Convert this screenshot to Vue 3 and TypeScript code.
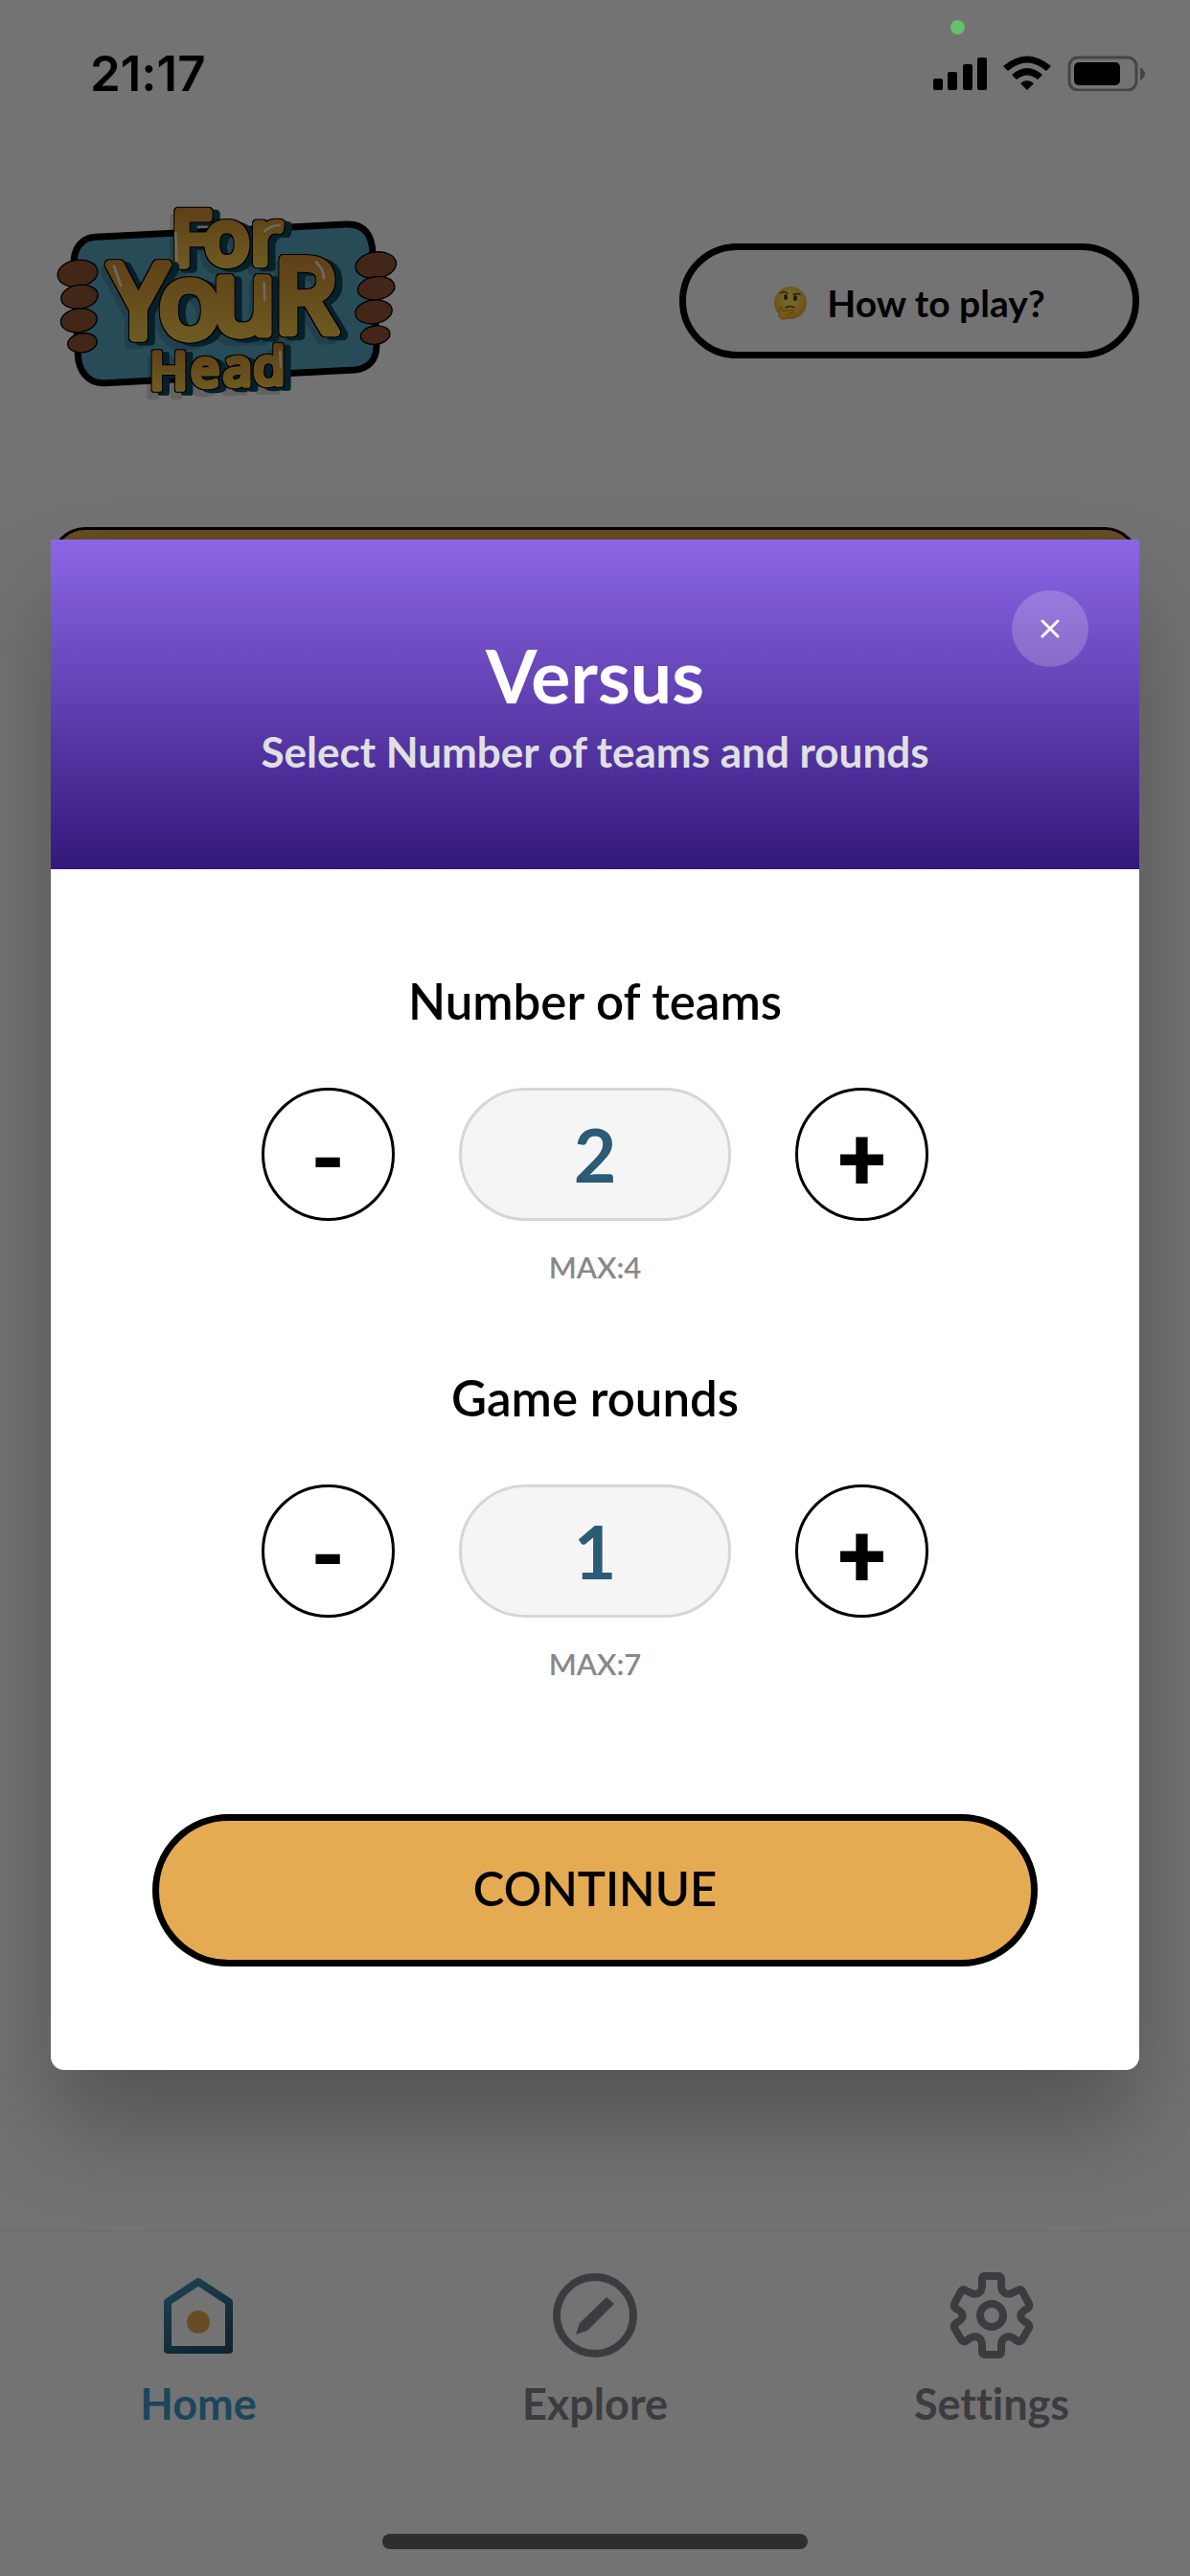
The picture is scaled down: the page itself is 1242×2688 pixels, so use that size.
<script setup lang="ts">
import { reactive, ref } from 'vue'

interface Counter {
  id: string
  label: string
  value: number
  max: number
}

interface Word {
  text: string
  x: string
  y: string
  size: number
  stroke: number
}

const open = ref(true)

const counters = reactive<Counter[]>([
  { id: 'teams', label: 'Number of teams', value: 2, max: 4 },
  { id: 'rounds', label: 'Game rounds', value: 1, max: 7 },
])

const step = (counter: Counter, delta: number) => {
  counter.value = Math.min(counter.max, Math.max(1, counter.value + delta))
}

const words: Word[] = [
  { text: 'For', x: '476 590 712', y: '256 255 253', size: 232, stroke: 26 },
  { text: 'Head', x: '407 521 623 722', y: '647 639 635 633', size: 160, stroke: 17 },
  { text: 'YouR', x: '312 472 644 836', y: '486 486 474 468', size: 320, stroke: 28 },
]

const fingers = [
  [122, 285, 63, 42], [128, 358, 58, 37], [126, 432, 57, 37], [137, 502, 46, 30],
  [1056, 259, 64, 41], [1057, 331, 58, 36], [1049, 405, 58, 37], [1054, 478, 46, 29],
]
</script>

<template>
  <div class="screen">
    <div class="app">
      <header class="status">
        <time class="clock">21:17</time>
        <svg class="status-icons" viewBox="0 0 222 37" width="222" height="37" aria-hidden="true">
          <rect x="1" y="24" width="10" height="12" rx="2" />
          <rect x="16" y="17" width="10" height="19" rx="2" />
          <rect x="32" y="9" width="10" height="27" rx="2" />
          <rect x="47" y="2" width="10" height="34" rx="2" />
          <path d="M74 11Q99-10 124 11L119 16Q99-1 79 16Z" />
          <path d="M83 20Q99 6 115 20L110 25Q99 16 88 25Z" />
          <path d="M92 29Q99 23 106 29L99 36Z" />
          <rect x="143" y="2" width="70" height="34" rx="9" fill="none" stroke="#999" stroke-width="3" />
          <rect x="148" y="7" width="48" height="24" rx="5" />
          <path d="M217 12Q222 15 222 19Q222 23 217 26Z" fill="#999" />
        </svg>
      </header>

      <div class="topbar">
        <svg class="logo" viewBox="50 50 1080 642" role="img" aria-label="For Your Head">
          <defs>
            <linearGradient id="gold" x1="0" y1="0" x2="0" y2="1">
              <stop offset="0.2" stop-color="#d08a34" />
              <stop offset="0.9" stop-color="#f8d24c" />
            </linearGradient>
            <filter id="block" x="-20%" y="-20%" width="140%" height="140%" color-interpolation-filters="sRGB">
              <feMorphology in="SourceAlpha" operator="dilate" radius="4" result="edge" />
              <feOffset in="edge" dx="22" dy="10" result="moved" />
              <feFlood flood-color="#10475d" />
              <feComposite in2="moved" operator="in" result="depth" />
              <feOffset in="edge" dx="-12" dy="22" result="low" />
              <feFlood flood-color="#000" flood-opacity="0.15" />
              <feComposite in2="low" operator="in" result="haze" />
              <feMerge>
                <feMergeNode in="haze" />
                <feMergeNode in="depth" />
                <feMergeNode in="edge" />
                <feMergeNode in="SourceGraphic" />
              </feMerge>
            </filter>
          </defs>
          <path d="M110 250C112 190 150 172 180 171L965 131C1020 130 1045 165 1046 225L1058 510C1058 560 1030 583 990 587L205 628C155 630 125 590 123 540Z" fill="#58a9c4" stroke="#000" stroke-width="21" />
          <ellipse v-for="(f, i) in fingers" :key="i" :cx="f[0]" :cy="f[1]" :rx="f[2]" :ry="f[3]" :transform="`rotate(-8 ${f[0]} ${f[1]})`" fill="#935537" stroke="#000" stroke-width="4" />
          <text v-for="w in words" :key="w.text" class="word" :x="w.x" :y="w.y" :font-size="w.size" :stroke-width="w.stroke" text-anchor="middle" filter="url(#block)">{{ w.text }}</text>
          <g fill="none" stroke="#f3e6d2" stroke-width="8" stroke-linecap="round">
            <path d="M429 158L432 244M236 262L258 324M706 316L708 368M756 530L758 576M868 250Q892 268 893 300M708 152Q728 134 754 134" />
          </g>
        </svg>
        <button class="help" type="button">
          <svg viewBox="0 0 36 36" width="36" height="36" aria-hidden="true">
            <defs>
              <radialGradient id="skin" cx="0.5" cy="0.4" r="0.6">
                <stop offset="0.3" stop-color="#ffe45c" />
                <stop offset="1" stop-color="#f2a92c" />
              </radialGradient>
            </defs>
            <circle cx="18" cy="18" r="17" fill="url(#skin)" />
            <ellipse cx="13" cy="12" rx="2" ry="3" fill="#5b3511" />
            <ellipse cx="23" cy="13" rx="2" ry="3" fill="#5b3511" />
            <path d="M8 8Q11 5 15 8M21 9Q25 8 28 9M13 23Q18 20 22 23" fill="none" stroke="#5b3511" stroke-width="1.5" stroke-linecap="round" />
            <path d="M6 25Q6 22 9 23L10 27L20 25Q23 26 20 28L16 29Q16 35 11 35Q6 35 6 30Z" fill="#ffc83a" stroke="#dd8a1c" stroke-width="1" />
          </svg>
          How to play?
        </button>
      </div>

      <main class="deck"></main>

      <nav class="tabs">
        <a class="tab active" href="#home">
          <svg viewBox="0 0 92 92" width="92" height="92" aria-hidden="true">
            <defs>
              <linearGradient id="roof" x1="0" y1="0" x2="0.5" y2="1">
                <stop offset="0" stop-color="#4094be" />
                <stop offset="1" stop-color="#26566f" />
              </linearGradient>
            </defs>
            <path d="M46 11L78 32V82H14V32Z" fill="none" stroke="url(#roof)" stroke-width="8" stroke-linejoin="round" />
            <circle cx="46" cy="53" r="12" fill="#e5a951" />
          </svg>
          Home
        </a>
        <a class="tab" href="#explore">
          <svg viewBox="0 0 92 92" width="92" height="92" aria-hidden="true">
            <circle cx="46" cy="46" r="40" fill="none" stroke="currentColor" stroke-width="8" />
            <path d="M58 27L66 34L38 62L26 66L30 54Z" fill="currentColor" />
          </svg>
          Explore
        </a>
        <a class="tab" href="#settings">
          <svg viewBox="0 0 92 92" width="92" height="92" fill="none" stroke="currentColor" stroke-width="8" stroke-linejoin="round" aria-hidden="true">
            <path d="M39 5H53Q56 5 56 9V14C56 23 62 26 69 22L73 20Q76 18 78 21L85 34Q86 37 83 39C74 44 74 49 83 54Q86 56 85 59L78 71Q76 74 73 73L69 70C62 66 56 69 56 78V83Q56 87 53 87H39Q36 87 36 83V78C36 69 30 66 23 70L19 73Q16 74 14 71L7 59Q6 56 9 54C18 49 18 44 9 39Q6 37 7 34L14 21Q16 18 19 20L23 22C30 26 36 23 36 14V9Q36 5 39 5Z" />
            <circle cx="46" cy="46" r="12" />
          </svg>
          Settings
        </a>
      </nav>
    </div>

    <div v-if="open" class="overlay">
      <section class="modal" role="dialog" aria-modal="true" aria-labelledby="dialog-title">
        <div class="modal-head">
          <h1 id="dialog-title">Versus</h1>
          <p>Select Number of teams and rounds</p>
          <button class="close" type="button" aria-label="Close" @click="open = false">
            <svg viewBox="0 0 20 20" width="20" height="20" aria-hidden="true">
              <path d="M2 2L18 18M18 2L2 18" stroke="#fff" stroke-width="3" stroke-linecap="round" />
            </svg>
          </button>
        </div>
        <div class="modal-body">
          <div v-for="c in counters" :key="c.id" class="counter">
            <h2 :id="c.id">{{ c.label }}</h2>
            <div class="stepper" role="group" :aria-labelledby="c.id">
              <button class="round" type="button" @click="step(c, -1)">-</button>
              <output class="value">{{ c.value }}</output>
              <button class="round" type="button" @click="step(c, 1)">+</button>
            </div>
            <p class="max">MAX:{{ c.max }}</p>
          </div>
          <button class="continue" type="button">CONTINUE</button>
        </div>
      </section>
    </div>

    <span class="camera-dot"></span>
    <span class="home-bar"></span>
  </div>
</template>

<style>
body {
  margin: 0;
}
</style>

<style scoped>
.screen {
  position: relative;
  min-height: 100vh;
  font-family: Lato, "Noto Sans", sans-serif;
  font-variant-ligatures: none;
  color: #000;
}

.screen * {
  box-sizing: border-box;
}

button {
  padding: 0;
  font: inherit;
  color: inherit;
  cursor: pointer;
}

h1,
h2,
p {
  margin: 0;
}

.app {
  display: flex;
  flex-direction: column;
  min-height: 100vh;
  background: #fff;
}

.status {
  display: flex;
  align-items: center;
  justify-content: space-between;
  height: 152px;
  padding: 0 47px 0 94px;
}

.clock {
  font-family: Inter, sans-serif;
  font-size: 51px;
  font-weight: 600;
}

.topbar {
  display: flex;
  align-items: center;
  justify-content: space-between;
  height: 324px;
  padding: 0 53px 0 57px;
}

.logo {
  width: 360px;
  height: 214px;
  overflow: visible;
}

.word {
  font-family: "Noto Sans", sans-serif;
  font-weight: 400;
  fill: url(#gold);
  stroke: url(#gold);
  stroke-linejoin: round;
}

.help {
  display: flex;
  align-items: center;
  justify-content: center;
  gap: 20px;
  width: 480px;
  height: 120px;
  padding-top: 4px;
  background: #fff;
  border: 7px solid #000;
  border-radius: 60px;
  font-size: 39px;
  font-weight: 700;
}

.deck {
  flex: 1;
  margin: 74px 53px 240px;
  background: #e5a951;
  border: 3px solid #000;
  border-radius: 36px;
}

.tabs {
  display: grid;
  grid-template-columns: repeat(3, 1fr);
  height: 361px;
  padding-top: 40px;
  border-top: 3px solid #f6f6f6;
}

.tab {
  display: flex;
  flex-direction: column;
  align-items: center;
  gap: 20px;
  color: #85838e;
  font-size: 45px;
  line-height: 52px;
  font-weight: 700;
  text-decoration: none;
}

.tab.active {
  color: #3c9bca;
}

.overlay {
  position: absolute;
  inset: 0;
  display: flex;
  flex-direction: column;
  justify-content: center;
  padding: 34px 53px 0;
  background: rgba(0, 0, 0, 0.55);
}

.modal {
  overflow: hidden;
  background: #fff;
  border-radius: 0 0 14px 14px;
  box-shadow: 0 60px 100px rgba(0, 0, 0, 0.27);
}

.modal-head {
  position: relative;
  height: 344px;
  padding-top: 95px;
  background: linear-gradient(#8b67e6, #33187a);
  color: #fff;
  text-align: center;
}

h1 {
  font-size: 77px;
  line-height: 92px;
  font-weight: 700;
}

.modal-head p {
  color: #e0e0e0;
  font-size: 44px;
  line-height: 68px;
  font-weight: 700;
}

.close {
  position: absolute;
  top: 53px;
  right: 53px;
  display: grid;
  place-items: center;
  width: 80px;
  height: 80px;
  background: rgba(255, 255, 255, 0.2);
  border: 0;
  border-radius: 50%;
}

.modal-body {
  padding: 108px 106px;
}

.counter {
  display: flex;
  flex-direction: column;
  align-items: center;
  height: 414px;
}

h2 {
  font-size: 51px;
  line-height: 60px;
  font-weight: 600;
}

.stepper {
  display: flex;
  gap: 67px;
  margin-top: 60px;
}

.round {
  width: 139px;
  height: 139px;
  padding-top: 12px;
  background: #fff;
  border: 3px solid #000;
  border-radius: 50%;
  font-family: Roboto, sans-serif;
  font-size: 92px;
  line-height: 120px;
  font-weight: 700;
}

.value {
  width: 284px;
  height: 139px;
  background: #f5f5f5;
  border: 3px solid #d6d6d6;
  border-radius: 70px;
  color: #2b5b75;
  font-size: 77px;
  line-height: 132px;
  font-weight: 700;
  text-align: center;
}

.max {
  margin-top: 28px;
  color: #888;
  font-size: 31px;
  line-height: 40px;
  font-weight: 600;
}

.continue {
  width: 100%;
  height: 159px;
  margin-top: 50px;
  padding-bottom: 4px;
  background: #e5ab52;
  border: 7px solid #000;
  border-radius: 80px;
  font-size: 49px;
  font-weight: 600;
}

.camera-dot {
  position: absolute;
  top: 21px;
  left: calc(80.5% - 8px);
  width: 15px;
  height: 15px;
  background: #66bf69;
  border-radius: 50%;
}

.home-bar {
  position: absolute;
  bottom: 28px;
  left: 50%;
  width: 444px;
  height: 16px;
  margin-left: -222px;
  background: #2e2e2e;
  border-radius: 8px;
}
</style>
